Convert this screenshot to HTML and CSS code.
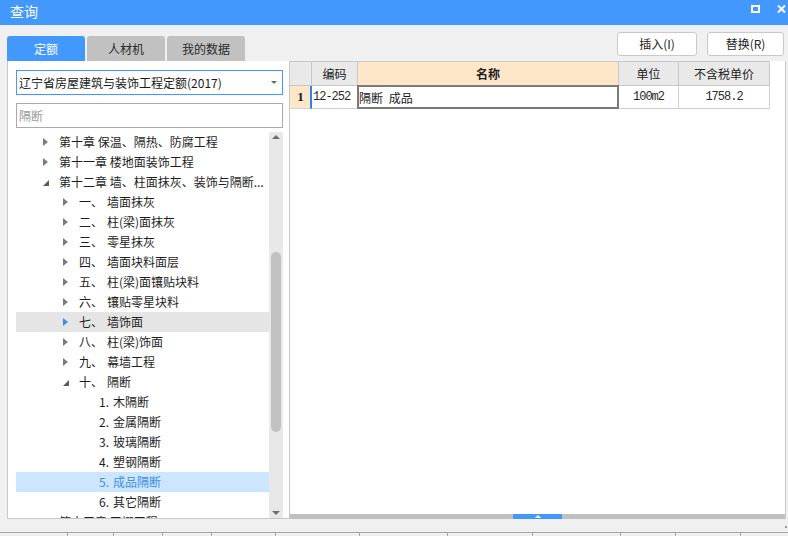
FILE: index.html
```html
<!DOCTYPE html>
<html lang="zh-CN">
<head>
<meta charset="utf-8">
<title>查询</title>
<link rel="stylesheet" href="styles.css">
</head>
<body>
<div class="window">
  <div class="titlebar">
    <span class="title">查询</span>
    <div class="win-ctrls">
      <svg class="ico" width="9" height="8" viewBox="0 0 9 8"><rect x="1" y="1" width="7" height="6" fill="none" stroke="#fff" stroke-width="2"/></svg>
      <svg class="ico" width="9" height="8" viewBox="0 0 9 8"><path d="M1 0.5 L8 7.5 M8 0.5 L1 7.5" stroke="#fff" stroke-width="2" fill="none"/></svg>
    </div>
  </div>

  <div class="toolbar">
    <div class="tabs">
      <div class="tab active">定额</div>
      <div class="tab">人材机</div>
      <div class="tab">我的数据</div>
    </div>
    <div class="actions">
      <button class="btn btn-insert">插入(I)</button>
      <button class="btn btn-replace">替换(R)</button>
    </div>
  </div>

  <div class="main">
    <div class="left">
      <div class="select"><span class="select-text">辽宁省房屋建筑与装饰工程定额(2017)</span><span class="caret"></span></div>
      <div class="search">隔断</div>
      <div class="tree">
        <div class="rows">
          <div class="row l1"><span class="arrow closed"></span><span>第十章 保温、隔热、防腐工程</span></div>
          <div class="row l1"><span class="arrow closed"></span><span>第十一章 楼地面装饰工程</span></div>
          <div class="row l1"><span class="arrow open"></span><span>第十二章 墙、柱面抹灰、装饰与隔断...</span></div>
          <div class="row l2"><span class="arrow closed"></span><span class="num">一、</span><span>墙面抹灰</span></div>
          <div class="row l2"><span class="arrow closed"></span><span class="num">二、</span><span>柱(梁)面抹灰</span></div>
          <div class="row l2"><span class="arrow closed"></span><span class="num">三、</span><span>零星抹灰</span></div>
          <div class="row l2"><span class="arrow closed"></span><span class="num">四、</span><span>墙面块料面层</span></div>
          <div class="row l2"><span class="arrow closed"></span><span class="num">五、</span><span>柱(梁)面镶贴块料</span></div>
          <div class="row l2"><span class="arrow closed"></span><span class="num">六、</span><span>镶贴零星块料</span></div>
          <div class="row l2 hover"><span class="arrow closed"></span><span class="num">七、</span><span>墙饰面</span></div>
          <div class="row l2"><span class="arrow closed"></span><span class="num">八、</span><span>柱(梁)饰面</span></div>
          <div class="row l2"><span class="arrow closed"></span><span class="num">九、</span><span>幕墙工程</span></div>
          <div class="row l2"><span class="arrow open"></span><span class="num">十、</span><span>隔断</span></div>
          <div class="row l3"><span class="arrow"></span><span class="num">1.</span><span>木隔断</span></div>
          <div class="row l3"><span class="arrow"></span><span class="num">2.</span><span>金属隔断</span></div>
          <div class="row l3"><span class="arrow"></span><span class="num">3.</span><span>玻璃隔断</span></div>
          <div class="row l3"><span class="arrow"></span><span class="num">4.</span><span>塑钢隔断</span></div>
          <div class="row l3 selected"><span class="arrow"></span><span class="num">5.</span><span>成品隔断</span></div>
          <div class="row l3"><span class="arrow"></span><span class="num">6.</span><span>其它隔断</span></div>
          <div class="row l1"><span class="arrow closed"></span><span>第十三章 天棚工程</span></div>
        </div>
        <div class="vscroll">
          <span class="vup"></span>
          <span class="vthumb"></span>
          <span class="vdown"></span>
        </div>
      </div>
    </div>

    <div class="right">
      <div class="grid">
        <div class="cell head"></div>
        <div class="cell head">编码</div>
        <div class="cell head active-col">名称</div>
        <div class="cell head">单位</div>
        <div class="cell head">不含税单价</div>

        <div class="cell rownum">1</div>
        <div class="cell mono left-al">12-252</div>
        <div class="cell current">隔断 成品</div>
        <div class="cell mono">100m2</div>
        <div class="cell mono">1758.2</div>
      </div>
      <div class="hscroll"><div class="hthumb"><span class="hup"></span></div></div>
    </div>
  </div>

  <div class="status"><span class="grip"></span></div>
  <div class="footer-grid">
    <span class="fc w68"></span><span class="fc w46"></span><span class="fc w49"></span><span class="fc w49"></span><span class="fc w64"></span><span class="fc w84"></span><span class="fc w88"></span><span class="fc w85"></span><span class="fc w88"></span><span class="fc w55"></span><span class="fc w65"></span>
  </div>
</div>
</body>
</html>
```

FILE: styles.css
```css
* { box-sizing: border-box; }
html, body { margin: 0; padding: 0; }
body {
  width: 788px;
  height: 536px;
  overflow: hidden;
  background: #f0f0f0;
  font-family: "Noto Sans CJK SC", "Microsoft YaHei", sans-serif;
  font-size: 12px;
  color: #1e1e1e;
}
.window { display: flex; flex-direction: column; height: 536px; }

/* title bar */
.titlebar {
  height: 25px;
  flex: none;
  background: #4398fe;
  color: #fff;
  display: flex;
  justify-content: space-between;
  align-items: flex-start;
}
.title { font-size: 14px; line-height: 20px; padding: 1px 0 0 10px; }
.win-ctrls { display: flex; gap: 17px; padding: 5px 2px 0 0; }
.ico { display: block; }

/* toolbar */
.toolbar {
  height: 36px;
  flex: none;
  display: flex;
  justify-content: space-between;
  align-items: flex-end;
  padding: 0 4px 0 7px;
}
.tabs { display: flex; gap: 2px; }
.tab {
  width: 78px;
  height: 25px;
  line-height: 25px;
  text-align: center;
  background: #c1c1c1;
  color: #2a2a2a;
  border-radius: 3px 3px 0 0;
}
.tab.active { background: #4398fe; color: #fff; }
.actions { display: flex; gap: 10px; margin-bottom: 5px; }
.btn {
  height: 24px;
  padding: 0;
  background: #fff;
  border: 1px solid #c9c9c9;
  border-radius: 3px;
  font: inherit;
  color: #222;
  line-height: 22px;
}
.btn-insert { width: 80px; }
.btn-replace { width: 77px; }

/* main area */
.main { height: 458px; flex: none; display: flex; }
.left {
  width: 282px;
  margin-left: 7px;
  background: #fff;
  border-left: 1px solid #c8c8c8;
  border-bottom: 1px solid #c8c8c8;
  padding: 9px 6px 0 8px;
  display: flex;
  flex-direction: column;
}
.select {
  height: 25px;
  flex: none;
  border: 1px solid #4398fe;
  display: flex;
  align-items: center;
  justify-content: space-between;
  padding: 0 5px 0 2px;
  line-height: 23px;
  color: #1a1a1a;
}
.caret {
  width: 0; height: 0;
  border-left: 3px solid transparent;
  border-right: 3px solid transparent;
  border-top: 3px solid #6a6a6a;
}
.search {
  height: 25px;
  flex: none;
  margin-top: 8px;
  border: 1px solid #a9a9a9;
  padding-left: 2px;
  line-height: 23px;
  color: #9a9a9a;
}
.tree { flex: 1; min-height: 0; margin-top: 4px; display: flex; overflow: hidden; }
.rows { width: 253px; flex: none; overflow: hidden; }
.row {
  height: 20px;
  line-height: 20px;
  display: flex;
  align-items: center;
  white-space: nowrap;
}
.row.l1 { padding-left: 27px; }
.row.l2 { padding-left: 47px; }
.row.l3 { padding-left: 67px; }
.row.hover { background: #e5e5e5; }
.row.selected { background: #cce6ff; color: #3a8ee6; }
.arrow { width: 16px; height: 20px; flex: none; display: flex; align-items: center; }
.arrow.closed::before {
  content: "";
  border-top: 4px solid transparent;
  border-bottom: 4px solid transparent;
  border-left: 5px solid #7c7c7c;
}
.arrow.open::before {
  content: "";
  margin-top: 2px;
  border-top: 6px solid transparent;
  border-right: 6px solid #595959;
}
.row.hover .arrow.closed::before { border-left-color: #3a8ee6; }
.row.l2 .num { display: inline-block; width: 28px; }
.row.l3 .num { display: inline-block; width: 14px; }

.vscroll {
  width: 14px;
  flex: none;
  background: #e8e8e8;
  display: flex;
  flex-direction: column;
  align-items: center;
}
.vup {
  margin-top: 3px;
  border-left: 4px solid transparent;
  border-right: 4px solid transparent;
  border-bottom: 4px solid #6d6d6d;
}
.vthumb {
  width: 10px;
  height: 180px;
  margin-top: 113px;
  border-radius: 5px;
  background: #c2c2c2;
}
.vdown {
  margin-top: auto;
  margin-bottom: 3px;
  border-left: 4px solid transparent;
  border-right: 4px solid transparent;
  border-top: 4px solid #6d6d6d;
}

/* right panel */
.right {
  flex: 1;
  margin-right: 2px;
  background: #fff;
  border-left: 1px solid #c8c8c8;
  border-right: 1px solid #c8c8c8;
  display: flex;
  flex-direction: column;
}
.grid {
  display: grid;
  grid-template-columns: 22px 46px 261px 60px 91px;
  grid-template-rows: 24px 23px;
  border-top: 1px solid #c8c8c8;
  width: max-content;
}
.cell {
  border-right: 1px solid #cfcfcf;
  border-bottom: 1px solid #cfcfcf;
  display: flex;
  align-items: center;
  justify-content: center;
  white-space: nowrap;
  color: #1a1a1a;
}
.cell.head { background: #e9e9e9; color: #222; border-color: #c8c8c8; }
.cell.head.active-col { background: #fee6c9; font-weight: bold; }
.cell.rownum {
  background: #fee6c9;
  font-family: "Liberation Serif", serif;
  font-weight: bold;
  font-size: 13px;
  border-right: 2px solid #2f86e8;
  padding-left: 1px;
}
.cell.mono { font-family: "Liberation Mono", monospace; font-size: 12px; letter-spacing: -1px; color: #2a2a2a; }
.cell.left-al { justify-content: flex-start; padding-left: 1px; }
.cell.current { position: relative; justify-content: flex-start; padding-left: 1px; word-spacing: 3px; }
.cell.current::after {
  content: "";
  position: absolute;
  inset: -1px;
  border: 2px solid #7a7a7a;
}
.hscroll {
  margin-top: auto;
  height: 5px;
  flex: none;
  background: #c0c0c0;
  display: flex;
}
.hthumb {
  margin-left: 223px;
  width: 49px;
  height: 5px;
  background: #4398fe;
  display: flex;
  justify-content: center;
  align-items: center;
}
.hup {
  border-left: 3px solid transparent;
  border-right: 3px solid transparent;
  border-bottom: 3px solid #fff;
}

/* bottom */
.status {
  height: 13px;
  flex: none;
  display: flex;
  justify-content: flex-end;
  align-items: flex-start;
  padding: 7px 1px 0 0;
}
.grip { width: 2px; height: 2px; background: #9a9a9a; }
.footer-grid {
  height: 4px;
  flex: none;
  border-top: 1px solid #a6a6a6;
  display: flex;
}
.fc { height: 3px; flex: none; border-right: 1px solid #a6a6a6; }
.w46 { width: 46px; } .w49 { width: 49px; } .w55 { width: 55px; } .w64 { width: 64px; }
.w65 { width: 65px; } .w68 { width: 68px; } .w84 { width: 84px; } .w85 { width: 85px; } .w88 { width: 88px; }
```
